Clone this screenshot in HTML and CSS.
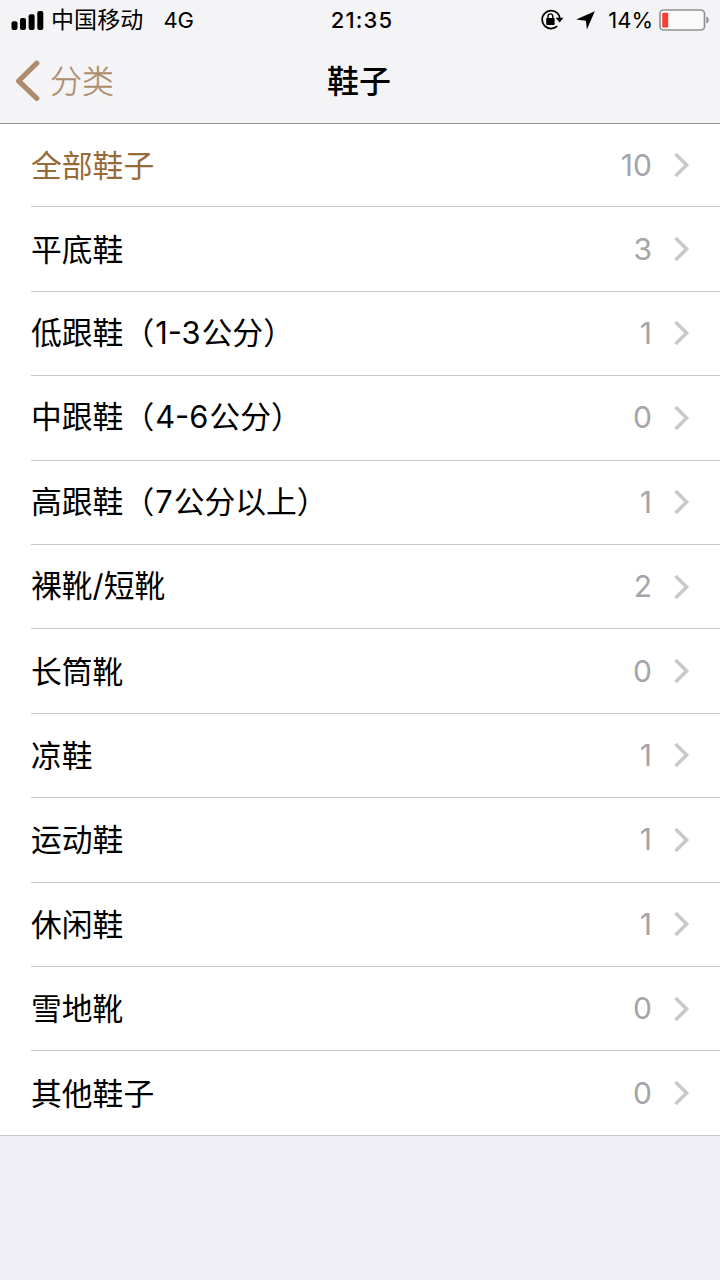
FILE: index.html
```
<!DOCTYPE html>
<html lang="zh-CN">
<head>
<meta charset="utf-8">
<title>鞋子</title>
<link rel="stylesheet" href="styles.css">
</head>
<body>
<svg class="defs" width="0" height="0" aria-hidden="true"><symbol id="next" viewBox="0 0 18 26"><path d="M2.5 2 13.6 13 2.5 24" fill="none" stroke="currentColor" stroke-width="3.5"/></symbol></svg>
<header class="header">
  <div class="status">
    <div class="status-left">
      <svg class="signal" width="33" height="20" viewBox="0 0 33 20"><rect x="0.5" y="11.3" width="6" height="8.7" rx="2"/><rect x="9" y="8" width="6" height="12" rx="2"/><rect x="17.6" y="4.3" width="6" height="15.7" rx="2"/><rect x="26.3" y="1" width="6" height="19" rx="2"/></svg>
      <span class="carrier">中国移动</span>
      <span class="network">4G</span>
    </div>
    <span class="time">21:35</span>
    <div class="status-right">
      <svg class="lock" width="24" height="22" viewBox="0 0 24 22"><path d="M17.2 3.9A9 9 0 1 0 17.2 17.2M17.2 3.9A9 9 0 0 1 19.7 9" fill="none" stroke="#000" stroke-width="1.8"/><path d="M15.6 8.7h7.8l-3.8 4.8z"/><rect x="6.2" y="9" width="8.4" height="7" rx=".8"/><path d="M8 10V7.3a2.4 2.4 0 0 1 4.8 0V10" fill="none" stroke="#000" stroke-width="1.4"/></svg>
      <svg class="location" width="19" height="19" viewBox="0 0 19 19"><path d="M18.8.3 10.9 18.6 9.9 9.7.1 8.6z"/></svg>
      <span class="percent">14%</span>
      <svg class="battery" width="51" height="22" viewBox="0 0 51 22"><rect x="1" y="1" width="44.5" height="20" rx="3.5" fill="#fafafb" stroke="#929294" stroke-width="1.7"/><rect x="3.2" y="3.7" width="6" height="14.8" rx=".8" fill="#fa3c32"/><path d="M47.3 7.5c3.2.7 3.2 6.3 0 7z" fill="#929294"/></svg>
    </div>
  </div>
  <nav class="nav">
    <a class="back"><svg width="26" height="42" viewBox="0 0 26 42"><path d="M22.8 3.2 4.6 21 22.8 38.3" fill="none" stroke="currentColor" stroke-width="5.2" stroke-linecap="round" stroke-linejoin="round"/></svg><span class="back-text">分类</span></a>
    <h1 class="title">鞋子</h1>
  </nav>
</header>
<main class="list">
  <div class="row active"><span class="name">全部鞋子</span><span class="count">10</span><svg class="next"><use href="#next"/></svg></div>
  <div class="row"><span class="name">平底鞋</span><span class="count">3</span><svg class="next"><use href="#next"/></svg></div>
  <div class="row"><span class="name">低跟鞋（<span class="latin">1-3</span>公分）</span><span class="count">1</span><svg class="next"><use href="#next"/></svg></div>
  <div class="row"><span class="name">中跟鞋（<span class="latin">4-6</span>公分）</span><span class="count">0</span><svg class="next"><use href="#next"/></svg></div>
  <div class="row"><span class="name">高跟鞋（<span class="latin">7</span>公分以上）</span><span class="count">1</span><svg class="next"><use href="#next"/></svg></div>
  <div class="row"><span class="name">裸靴<span class="slash">/</span>短靴</span><span class="count">2</span><svg class="next"><use href="#next"/></svg></div>
  <div class="row"><span class="name">长筒靴</span><span class="count">0</span><svg class="next"><use href="#next"/></svg></div>
  <div class="row"><span class="name">凉鞋</span><span class="count">1</span><svg class="next"><use href="#next"/></svg></div>
  <div class="row"><span class="name">运动鞋</span><span class="count">1</span><svg class="next"><use href="#next"/></svg></div>
  <div class="row"><span class="name">休闲鞋</span><span class="count">1</span><svg class="next"><use href="#next"/></svg></div>
  <div class="row"><span class="name">雪地靴</span><span class="count">0</span><svg class="next"><use href="#next"/></svg></div>
  <div class="row"><span class="name">其他鞋子</span><span class="count">0</span><svg class="next"><use href="#next"/></svg></div>
</main>
</body>
</html>
```
FILE: styles.css
```
* { box-sizing: border-box; }
body {
  margin: 0;
  min-height: 1280px;
  background: #efeef4;
  color: #000;
  font-family: Inter, "Noto Sans CJK SC", sans-serif;
}
svg { display: block; flex: none; }
.defs { position: absolute; }
.header {
  height: 124px;
  background: #f4f4f7;
  border-bottom: 1px solid #929296;
}
.status {
  display: grid;
  grid-template-columns: 1fr auto 1fr;
  align-items: center;
  height: 40px;
  padding: 0 10px 0 11px;
  font-size: 22px;
  line-height: 40px;
  white-space: nowrap;
}
.status-left, .status-right { display: flex; align-items: center; }
.status-right { justify-content: flex-end; }
.carrier { margin-left: 7px; font-size: 23px; letter-spacing: 0.1px; }
.network { margin-left: 20px; }
.time { padding-left: 3px; font-weight: 500; letter-spacing: 1.1px; }
.location { margin-left: 12px; }
.percent { margin: 0 6px 0 13px; }
.nav {
  display: grid;
  grid-template-columns: 1fr auto 1fr;
  align-items: center;
  height: 82px;
  padding: 0 16px 0 14px;
}
.back { display: flex; align-items: center; gap: 10px; color: #ad8b6c; font-size: 32px; font-weight: 300; }
.back-text { padding-bottom: 4px; -webkit-text-stroke: 0.35px currentColor; }
.title { margin: 0; padding-bottom: 4px; font-size: 32px; font-weight: 500; }
.list { background: #fff; border-bottom: 1px solid #c8c7cc; }
.row {
  display: flex;
  align-items: center;
  height: 84.4px;
  margin-left: 31px;
  padding-right: 29px;
  border-bottom: 1px solid #c8c7cc;
}
.row:first-child { height: 83.4px; }
.row:last-child { height: 83.6px; border-bottom: 0; }
.name { flex: 1; padding-bottom: 3px; font-family: "Noto Sans CJK SC", sans-serif; font-size: 30.8px; line-height: 44px; }
.latin, .slash { font-family: Inter, sans-serif; }
.latin { margin: 0 1px; }
.count { padding-bottom: 1px; color: #a4a4a9; font-size: 30px; line-height: 44px; }
.active .name { color: #986a3a; }
.next { width: 18px; height: 26px; margin-left: 21px; color: #c7c7cc; }
```
